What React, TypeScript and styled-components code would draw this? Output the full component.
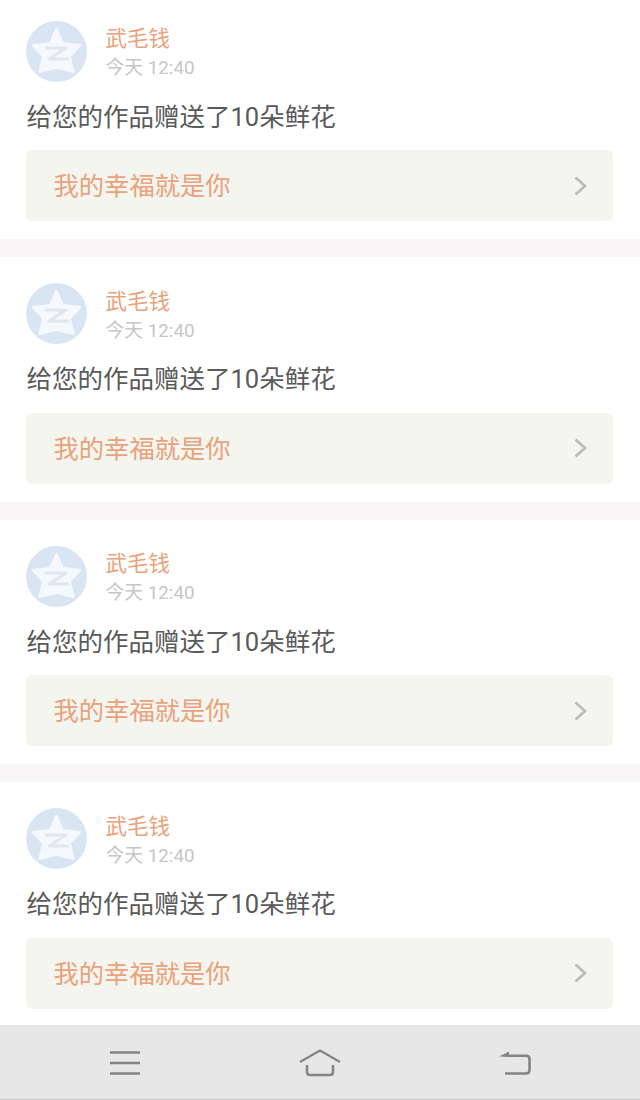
import React, { FC } from 'react';
import styled, { createGlobalStyle } from 'styled-components';

const GlobalStyle = createGlobalStyle`
  html, body {
    margin: 0;
    padding: 0;
    background: #fff;
  }
  body {
    font-family: Roboto, "Noto Sans CJK SC", sans-serif;
  }
`;

const StPage = styled.div`
  width: 640px;
  height: 1100px;
  display: flex;
  flex-direction: column;
  overflow: hidden;
`;

const StViewport = styled.div`
  flex: 1 1 auto;
  min-height: 0;
  overflow: hidden;
`;

/* list is scrolled a few px, the first card is cut at the top */
const StList = styled.div`
  margin-top: -5.5px;
  display: flex;
  flex-direction: column;
  gap: 18px;
  background: #f8f6f6;
`;

const StCard = styled.div`
  flex-shrink: 0;
  height: 244.5px;
  box-sizing: border-box;
  padding: 26px 27px 0 26px;
  background: #fff;
`;

const StHeader = styled.div`
  display: flex;
  align-items: center;
  gap: 18.5px;
  height: 61px;
`;

const StMeta = styled.div`
  display: flex;
  flex-direction: column;
  padding-top: 2px;
`;

const StName = styled.span`
  font-size: 21.5px;
  line-height: 32px;
  color: #e9a27b;
`;

const StTime = styled.span`
  font-size: 18.8px;
  line-height: 26px;
  color: #c6c6c6;
`;

const StMessage = styled.p`
  margin: 15px 0 13.5px;
  padding-left: 0.5px;
  font-size: 25.5px;
  line-height: 40px;
  color: #5a5a5a;
`;

const StGiftLink = styled.div`
  display: flex;
  align-items: center;
  justify-content: space-between;
  height: 71px;
  box-sizing: border-box;
  padding: 0 26px 3px 27.5px;
  border-radius: 6px;
  background: #f5f5ef;
  font-size: 25.3px;
  color: #e9a27b;
`;

const StChevron = styled.svg`
  margin-top: 3px;
`;

const StNav = styled.div`
  flex-shrink: 0;
  height: 75px;
  box-sizing: border-box;
  padding: 2px 109px 0;
  display: flex;
  align-items: center;
  justify-content: space-between;
  background: #e7e7e7;
  border-bottom: 1px solid #c9c9c9;
`;

const Avatar: FC = () => (
  <svg width="61" height="61" viewBox="0 0 61 61">
    <circle cx="30.5" cy="30.5" r="30.5" fill="#d9e5f3" />
    <path
      d="M30.5 8 L36.8 22.2 L54 24.2 L43.6 35.6 L47.4 50.8 L30.5 46.6 L13.6 50.8 L17.4 35.6 L7 24.2 L24.2 22.2 Z"
      fill="#f5f8fc"
      stroke="#f5f8fc"
      strokeWidth="2.5"
      strokeLinejoin="round"
    />
    <path
      d="M19 27 H40 L23 38 H43"
      fill="none"
      stroke="#dfe7f1"
      strokeWidth="3"
      strokeLinejoin="round"
    />
  </svg>
);

const Chevron: FC = () => (
  <StChevron width="13" height="20" viewBox="0 0 13 20">
    <path d="M1.5 1.5 L11 10 L1.5 18.5" fill="none" stroke="#bcbcb8" strokeWidth="2.8" />
  </StChevron>
);

const MenuIcon: FC = () => (
  <svg width="32" height="24" viewBox="0 0 32 24">
    <path d="M1 1.5 H31 M1 12 H31 M1 22.5 H31" stroke="#858585" strokeWidth="2.4" />
  </svg>
);

const HomeIcon: FC = () => (
  <svg width="42" height="28" viewBox="0 0 42 28">
    <path d="M1 13 L21 1.5 L41 13" fill="none" stroke="#858585" strokeWidth="2.2" />
    <path
      d="M8 16 V23 Q8 26 11 26 H31 Q34 26 34 23 V16"
      fill="none"
      stroke="#858585"
      strokeWidth="2.6"
    />
  </svg>
);

const BackIcon: FC = () => (
  <svg width="32" height="24" viewBox="0 0 32 24">
    <path d="M0 5.5 L10 0.5 V6 Z" fill="#858585" />
    <path
      d="M9 4.8 H27 Q30.5 4.8 30.5 8 V19 Q30.5 22.5 27 22.5 H6"
      fill="none"
      stroke="#858585"
      strokeWidth="2.6"
    />
  </svg>
);

const cards = [1, 2, 3, 4];

const App: FC = () => {
  return (
    <StPage>
      <GlobalStyle />
      <StViewport>
        <StList>
          {cards.map((id) => (
            <StCard key={id}>
              <StHeader>
                <Avatar />
                <StMeta>
                  <StName>武毛钱</StName>
                  <StTime>今天 12:40</StTime>
                </StMeta>
              </StHeader>
              <StMessage>给您的作品赠送了10朵鲜花</StMessage>
              <StGiftLink>
                <span>我的幸福就是你</span>
                <Chevron />
              </StGiftLink>
            </StCard>
          ))}
        </StList>
      </StViewport>
      <StNav>
        <MenuIcon />
        <HomeIcon />
        <BackIcon />
      </StNav>
    </StPage>
  );
};

export default App;
